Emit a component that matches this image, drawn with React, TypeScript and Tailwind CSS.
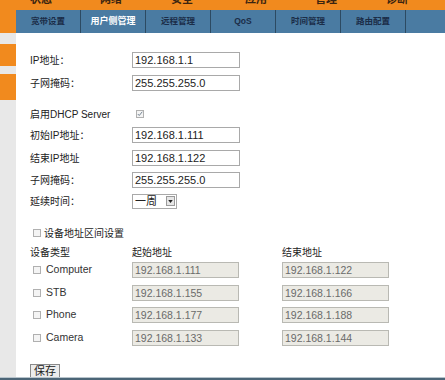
import { ReactNode } from 'react';

const TOP_MENU = [
  { label: '状态', x: 'w-[52px]' },
  { label: '网络', x: 'w-[70px]' },
  { label: '安全', x: 'w-[71px]' },
  { label: '应用', x: 'w-[74px]' },
  { label: '管理', x: 'w-[70px]' },
  { label: '诊断', x: 'w-[71px]' },
];

const SUB_MENU = ['宽带设置', '用户侧管理', '远程管理', 'QoS', '时间管理', '路由配置'];

const DEVICES = [
  { name: 'Computer', start: '192.168.1.111', end: '192.168.1.122', mt: 'mt-[2px]' },
  { name: 'STB', start: '192.168.1.155', end: '192.168.1.166', mt: 'mt-[7px]' },
  { name: 'Phone', start: '192.168.1.177', end: '192.168.1.188', mt: 'mt-[6px]' },
  { name: 'Camera', start: '192.168.1.133', end: '192.168.1.144', mt: 'mt-[7px]' },
];

function Row({ label, children, className = '' }: { label: string; children?: ReactNode; className?: string }) {
  return (
    <div className={`flex items-center h-[16px] ${className}`}>
      <div className="w-[102px] shrink-0">{label}</div>
      {children}
    </div>
  );
}

function TextBox({ value }: { value: string }) {
  return (
    <div className="w-[108px] h-[16px] border border-[#a9a9a9] bg-white px-[2px] flex items-center text-[11px] text-[#222] leading-none">
      {value}
    </div>
  );
}

function GrayBox({ value }: { value: string }) {
  return (
    <div className="w-[107px] h-[16px] border border-[#b9b9b3] bg-[#ebeae4] px-[2px] flex items-center text-[10.5px] text-[#6a6a6a] leading-none">
      {value}
    </div>
  );
}

function Check({ checked = false }: { checked?: boolean }) {
  return (
    <div className="w-[8px] h-[8px] border border-[#b0b0b0] bg-[#f4f4f4] flex items-center justify-center">
      {checked && (
        <svg viewBox="0 0 8 8" className="w-[6px] h-[6px]">
          <path d="M1 4 L3 6 L7 1" fill="none" stroke="#6a7a8a" strokeWidth="1.2" />
        </svg>
      )}
    </div>
  );
}

export default function App() {
  return (
    <div className="w-[445px] h-[380px] overflow-hidden bg-white flex flex-col font-['Liberation_Sans','Noto_Sans_CJK_SC',sans-serif] text-[10px] text-[#222]">
      {/* orange top menu, clipped */}
      <div className="h-[10px] shrink-0 bg-[#f18a1e] overflow-hidden flex">
        {TOP_MENU.map((m) => (
          <div key={m.label} className={`${m.x} shrink-0 flex justify-end`}>
            <span className="-mt-[8px] text-[11px] font-bold text-[#3a2410] leading-[14px]">{m.label}</span>
          </div>
        ))}
      </div>

      <div className="flex flex-1 min-h-0">
        {/* left strip */}
        <div className="w-[16px] shrink-0 bg-[#e8e8e8] flex flex-col">
          <div className="h-[23px] bg-[#f18a1e]" />
          <div className="h-[22px] mt-[11px] bg-[#f18a1e]" />
          <div className="h-[26px] mt-[8px] bg-[#f18a1e]" />
        </div>

        <div className="flex-1 flex flex-col min-w-0">
          {/* sub nav */}
          <div className="h-[23px] shrink-0 bg-[#4a7ba2] flex">
            {SUB_MENU.map((s, i) => (
              <div
                key={s}
                className={`w-[65px] shrink-0 border-r border-[#2c4a62] flex items-center justify-center font-bold leading-none ${
                  i === 1 ? 'text-white text-[9px]' : 'text-[#1b2d48] text-[8.5px]'
                } ${s === 'QoS' ? 'text-[7px]' : ''}`}
              >
                {s}
              </div>
            ))}
          </div>

          {/* form */}
          <div className="flex-1 pl-[14px] pt-[19px] flex flex-col">
            <Row label="IP地址：">
              <TextBox value="192.168.1.1" />
            </Row>
            <Row label="子网掩码：" className="mt-[7px]">
              <TextBox value="255.255.255.0" />
            </Row>

            <Row label="启用DHCP Server" className="mt-[15px]">
              <div className="ml-[4px]">
                <Check checked />
              </div>
            </Row>
            <Row label="初始IP地址：" className="mt-[5px]">
              <TextBox value="192.168.1.111" />
            </Row>
            <Row label="结束IP地址" className="mt-[7px]">
              <TextBox value="192.168.1.122" />
            </Row>
            <Row label="子网掩码：" className="mt-[6px]">
              <TextBox value="255.255.255.0" />
            </Row>
            <Row label="延续时间：" className="mt-[5px]">
              <div className="w-[45px] h-[15px] border border-[#a9a9a9] bg-white flex items-center justify-between pl-[2px] pr-[1px] text-[11px] leading-none">
                <span>一周</span>
                <div className="w-[9px] h-[10px] border border-[#9a9a9a] bg-[#e6e6e6] flex items-center justify-center">
                  <svg viewBox="0 0 6 4" className="w-[5px] h-[3px]">
                    <path d="M0 0 L6 0 L3 4 Z" fill="#222" />
                  </svg>
                </div>
              </div>
            </Row>

            <div className="flex items-center h-[16px] mt-[16px] pl-[3px]">
              <Check />
              <span className="ml-[3px]">设备地址区间设置</span>
            </div>

            <div className="flex items-center h-[16px] mt-[3px]">
              <div className="w-[102px]">设备类型</div>
              <div className="w-[150px]">起始地址</div>
              <div>结束地址</div>
            </div>

            {DEVICES.map((d) => (
              <div key={d.name} className={`flex items-center h-[16px] ${d.mt}`}>
                <div className="w-[102px] flex items-center pl-[3px] text-[#333]">
                  <Check />
                  <span className="ml-[5px] text-[10.5px]">{d.name}</span>
                </div>
                <GrayBox value={d.start} />
                <div className="w-[43px]" />
                <GrayBox value={d.end} />
              </div>
            ))}

            <div className="mt-[18px]">
              <button className="h-[14px] px-[3px] border border-[#8a8a8a] bg-[#ececec] text-[11px] leading-none text-[#222] flex items-center">
                保存
              </button>
            </div>
          </div>
        </div>
      </div>

      {/* bottom band */}
      <div className="h-[3px] shrink-0 bg-[#4c6577] border-t border-[#b8c4cc]" />
    </div>
  );
}
